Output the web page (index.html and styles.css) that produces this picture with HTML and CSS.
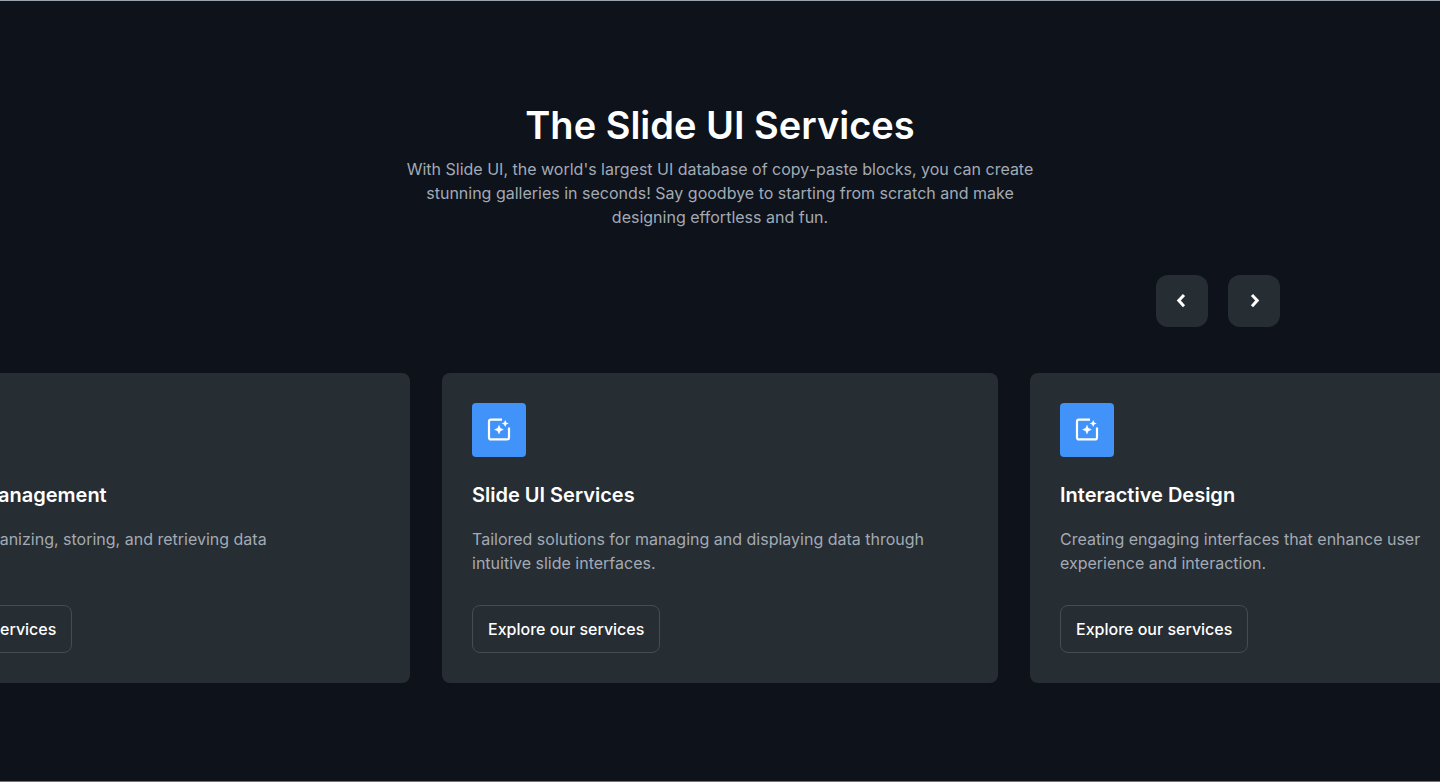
FILE: index.html
```html
<!DOCTYPE html>
<html lang="en">
<head>
<meta charset="utf-8">
<meta name="viewport" content="width=device-width, initial-scale=1">
<title>The Slide UI Services</title>
<link rel="stylesheet" href="styles.css">
</head>
<body>
<svg class="sprite" aria-hidden="true">
  <symbol id="frame-sparkle" viewBox="0 0 28 28">
    <path d="M17 3.600H6Q4 3.600 4 5.600V21.400Q4 23.400 6 23.400H22Q24 23.400 24 21.400V11.500" fill="none" stroke="currentColor" stroke-width="2.200"/>
    <path d="M14 9.200L15.300 12.300L18.400 13.600L15.300 14.900L14 18L12.700 14.900L9.600 13.600L12.700 12.300Z" fill="currentColor" stroke="currentColor" stroke-width=".4"/>
    <path d="M20.200 4L21.300 6.400L23.700 7.500L21.300 8.600L20.200 11L19.100 8.600L16.700 7.500L19.100 6.400Z" fill="currentColor"/>
  </symbol>
</svg>
<main class="services">
  <header class="intro">
    <h1 class="intro-title">The Slide UI Services</h1>
    <p class="intro-text">With Slide UI, the world's largest UI database of copy-paste blocks, you can create stunning galleries in seconds! Say goodbye to starting from scratch and make designing effortless and fun.</p>
  </header>
  <div class="controls">
    <button class="control" type="button" aria-label="Previous">
      <svg width="24" height="24" viewBox="0 0 24 24"><path d="M14 6L8.800 11.600L14 17.200" /></svg>
    </button>
    <button class="control" type="button" aria-label="Next">
      <svg width="24" height="24" viewBox="0 0 24 24"><path d="M10 6L15.200 11.600L10 17.200" /></svg>
    </button>
  </div>
  <div class="track">
    <article class="card">
      <span class="card-icon"><svg width="28" height="28"><use href="#frame-sparkle"/></svg></span>
      <h2 class="card-title">Fast Data Management</h2>
      <p class="card-text">Support for organizing, storing, and retrieving data</p>
      <button class="card-button" type="button">Explore our services</button>
    </article>
    <article class="card">
      <span class="card-icon"><svg width="28" height="28"><use href="#frame-sparkle"/></svg></span>
      <h2 class="card-title">Slide UI Services</h2>
      <p class="card-text">Tailored solutions for managing and displaying data through intuitive slide interfaces.</p>
      <button class="card-button" type="button">Explore our services</button>
    </article>
    <article class="card">
      <span class="card-icon"><svg width="28" height="28"><use href="#frame-sparkle"/></svg></span>
      <h2 class="card-title">Interactive Design</h2>
      <p class="card-text">Creating engaging interfaces that enhance user<br>experience and interaction.</p>
      <button class="card-button" type="button">Explore our services</button>
    </article>
  </div>
</main>
</body>
</html>
```

FILE: styles.css
```css
* { box-sizing: border-box; }
html { background: #fff; }
body {
  margin: 0;
  color: #fff;
  font-family: Inter, "Liberation Sans", sans-serif;
  font-size: 16px;
  line-height: 24px;
}
h1, h2, p { margin: 0; }
button { font: inherit; color: inherit; cursor: pointer; }
svg { display: block; }
.sprite { display: none; }
.services {
  border-top: 1px solid #9ba3ae;
  border-bottom: 1px solid #6b7280;
  background: #0d121b;
  padding: 100px 0 98px;
  overflow: hidden;
}
.intro {
  max-width: 640px;
  margin: 0 auto;
  text-align: center;
}
.intro-title {
  font-size: 38px;
  line-height: 48px;
  font-weight: 600;
  margin-bottom: 8px;
}
.intro-text, .card-text { color: #a3aab4; }
.controls {
  display: flex;
  justify-content: flex-end;
  gap: 20px;
  max-width: 1120px;
  margin: 46px auto;
}
.control {
  display: grid;
  place-items: center;
  width: 52px;
  height: 52px;
  padding: 0;
  border: 0;
  border-radius: 12px;
  background: #262d33;
}
.control path {
  fill: none;
  stroke: #fff;
  stroke-width: 3;
}
.track {
  display: flex;
  justify-content: center;
  gap: 32px;
}
.card {
  display: flex;
  flex-direction: column;
  align-items: flex-start;
  flex: 0 0 556px;
  padding: 30px;
  border-radius: 8px;
  background: #262d33;
}
.card-icon {
  display: grid;
  place-items: center;
  width: 54px;
  height: 54px;
  border-radius: 4px;
  background: #4192f9;
}
.card-title {
  margin: 24px 0 18px;
  font-size: 20px;
  line-height: 28px;
  font-weight: 600;
}
.card-text { flex: 1; }
.card-button {
  margin-top: 30px;
  height: 48px;
  padding: 0 15px;
  border: 1px solid #454c55;
  border-radius: 8px;
  background: transparent;
  font-weight: 500;
}
```
